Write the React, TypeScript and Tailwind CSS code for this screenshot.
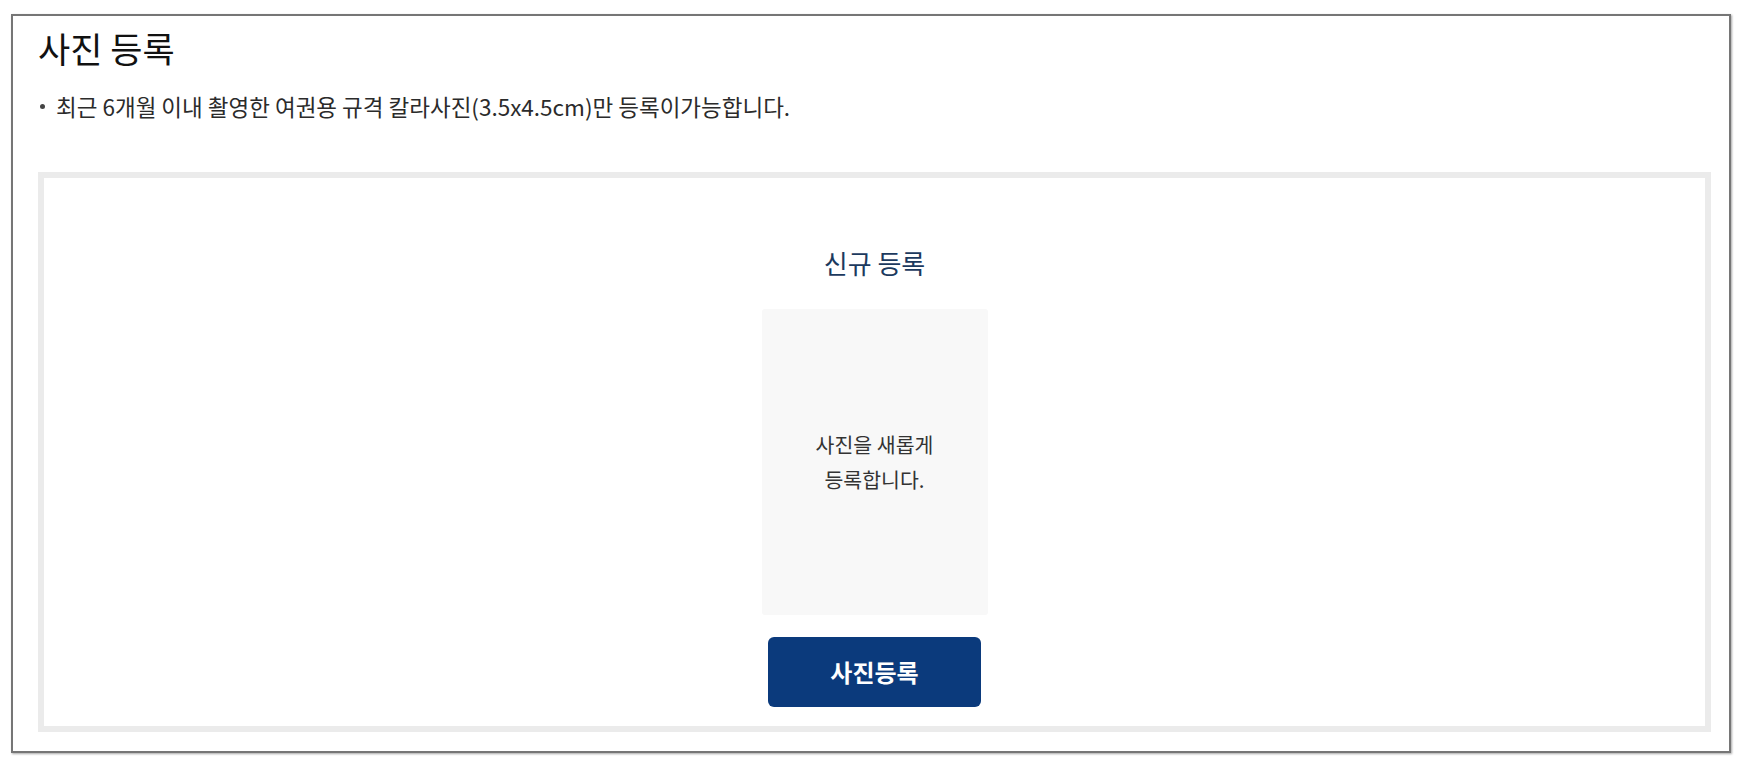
import React from "react";

const font = { fontFamily: '"Noto Sans CJK KR", "Noto Sans", sans-serif' };

export default function App() {
  return (
    <div className="min-h-screen bg-white pt-[14px] pl-[11px]" style={font}>
      {/* outer panel */}
      <div className="w-[1720px] h-[739px] border-2 border-[#767676] shadow-[1px_1px_2px_rgba(0,0,0,0.35)] pl-[25px] pr-[18px] pt-[12px] flex flex-col">
        <h1 className="text-[35px] leading-[40px] text-[#111] font-normal">사진 등록</h1>
        <p className="mt-[24px] text-[22.5px] leading-[28px] text-[#2b2b2b] flex items-center">
          <span className="inline-block w-[5px] h-[5px] rounded-full bg-[#444] ml-[2px] mr-[11px]" />
          최근 6개월 이내 촬영한 여권용 규격 칼라사진(3.5x4.5cm)만 등록이가능합니다.
        </p>

        {/* registration box */}
        <div className="mt-[52px] h-[560px] border-[6px] border-[#ebebeb] flex flex-col items-center pt-[68px]">
          <h2 className="text-[26px] leading-[34px] text-[#1c3a5e] font-normal">신규 등록</h2>
          <div className="mt-[29px] w-[226px] h-[306px] bg-[#f8f8f8] rounded-[3px] flex items-center justify-center">
            <p className="text-[20.5px] leading-[35px] text-[#333] text-center">
              사진을 새롭게
              <br />
              등록합니다.
            </p>
          </div>
          <button className="mt-[22px] w-[213px] h-[70px] rounded-[6px] bg-[#0b3a7c] text-white text-[24px] font-bold">
            사진등록
          </button>
        </div>
      </div>
    </div>
  );
}
